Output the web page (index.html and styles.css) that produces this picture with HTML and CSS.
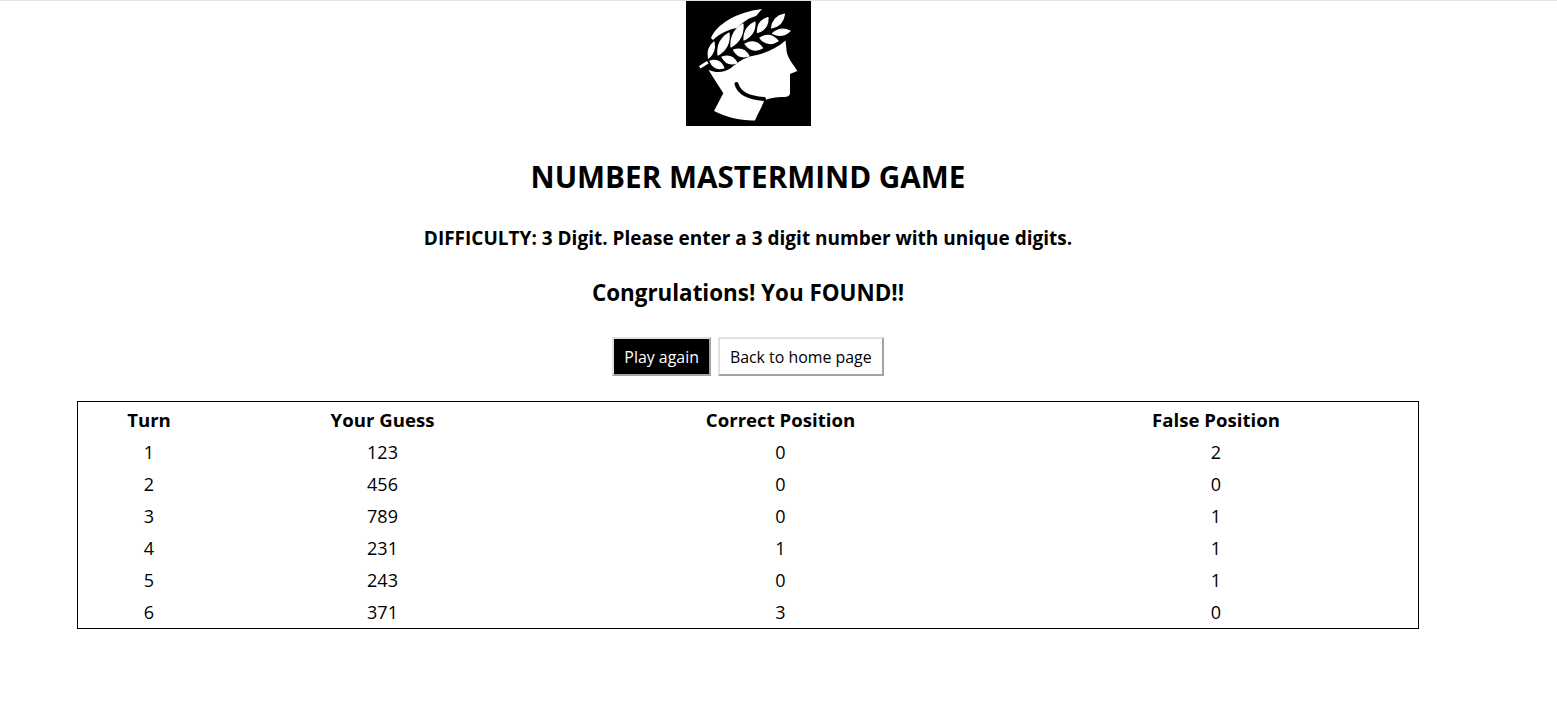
FILE: index.html
```html
<!DOCTYPE html>
<html lang="en">
<head>
<meta charset="utf-8">
<title>Number Mastermind Game</title>
<link rel="stylesheet" href="styles.css">
</head>
<body>
<main class="page">
  <svg class="logo" viewBox="0 0 125 125" role="img" aria-label="Laurel-crowned head">
    <rect class="logo-bg" width="125" height="125"/>
    <path class="w" d="M22.5 69C30 72 38 72 45 67C52 61 58 57 66 55C78 53 90 48 99.5 39.5L100.7 50.7C102 58 108 64 111.3 70L104 73L104 92C104 95 101 96 98 96C90 96 82 97 78 100C75 108 71 114 69 119.5C55 120 40 116 28 110L37.3 92.3Z"/>
    <path class="smile" d="M50.5 83C53 92 63 97 78 98"/>
    <path class="w" d="M25 37C30 24 50 11 76 8L70 15C62 17 56 22 51 27C44 28 34 32 27 39Z"/>
    <path class="w" d="M13 65L21 60L22.5 62.5L14.5 67.5Z"/>
    <path class="w leaf" d="M22.5 57Q20.5 47.4 28 41Q30 50.6 22.5 57Z"/>
    <path class="w leaf" d="M32 54Q30.4 39.4 43 32Q44.6 46.6 32 54Z"/>
    <path class="w leaf" d="M45 46Q43.9 30.8 57 23Q58.1 38.2 45 46Z"/>
    <path class="w leaf" d="M58 39Q57.5 26.4 69 21Q69.5 33.6 58 39Z"/>
    <path class="w leaf" d="M71.5 31.5Q71 20 82 16.5Q82.5 28 71.5 31.5Z"/>
    <path class="w leaf" d="M85.5 27Q86.9 15.2 98.5 13Q97.1 24.8 85.5 27Z"/>
    <path class="w leaf" d="M24 60Q34.1 57.3 38 67Q27.9 69.7 24 60Z"/>
    <path class="w leaf" d="M36 56Q46.1 52.5 51 62Q40.9 65.5 36 56Z"/>
    <path class="w leaf" d="M47.5 49Q57.85 45.5 63 55Q52.65 58.5 47.5 49Z"/>
    <path class="w leaf" d="M59 43Q69.5 37.2 76.5 47Q66 52.8 59 43Z"/>
    <path class="w leaf" d="M74 37Q84.3 30.6 92 40Q81.7 46.4 74 37Z"/>
    <path class="w leaf" d="M86.5 32.5Q94.4 25.3 104 30Q96 37.2 86.5 32.5Z"/>
  </svg>
  <h1 class="title">NUMBER MASTERMIND GAME</h1>
  <h2 class="difficulty">DIFFICULTY: 3 Digit. Please enter a 3 digit number with unique digits.</h2>
  <h2 class="result">Congrulations! You FOUND!!</h2>
  <div class="actions">
    <button class="btn btn-dark" type="button">Play again</button>
    <button class="btn" type="button">Back to home page</button>
  </div>
  <table class="turns">
    <colgroup>
      <col class="c1"><col class="c2"><col class="c3"><col class="c4">
    </colgroup>
    <thead>
      <tr><th>Turn</th><th>Your Guess</th><th>Correct Position</th><th>False Position</th></tr>
    </thead>
    <tbody>
      <tr><td>1</td><td>123</td><td>0</td><td>2</td></tr>
      <tr><td>2</td><td>456</td><td>0</td><td>0</td></tr>
      <tr><td>3</td><td>789</td><td>0</td><td>1</td></tr>
      <tr><td>4</td><td>231</td><td>1</td><td>1</td></tr>
      <tr><td>5</td><td>243</td><td>0</td><td>1</td></tr>
      <tr><td>6</td><td>371</td><td>3</td><td>0</td></tr>
    </tbody>
  </table>
</main>
</body>
</html>
```
FILE: styles.css
```css
html, body { margin: 0; padding: 0; background: #fff; }
body {
  font-family: "Open Sans", "Noto Sans", sans-serif;
  color: #000;
  overflow: hidden;
  border-top: 1px solid #e4e4e4;
}
.page {
  width: 1496px;
  height: 705px;
  display: flex;
  flex-direction: column;
  align-items: center;
}
.logo { width: 125px; height: 125px; display: block; flex: none; }
.logo-bg { fill: #000; }
.w { fill: #fff; }
.leaf { stroke: #fff; stroke-width: 1.2; stroke-linejoin: round; }
.smile { fill: none; stroke: #000; stroke-width: 4; stroke-linecap: round; }
.title { margin: 32px 0 0; font-size: 29.7px; line-height: 38px; font-weight: 700; }
.difficulty { margin: 30px 0 0; font-size: 19px; line-height: 24px; font-weight: 700; }
.result { margin: 29px 0 0; font-size: 22.4px; line-height: 28px; font-weight: 700; }
.actions { margin-top: 30px; display: flex; gap: 7px; }
.btn {
  height: 39px;
  padding: 0 10px;
  border: 2px solid;
  border-color: #e0e0e0 #a3a3a3 #a3a3a3 #e0e0e0;
  background: #fff;
  color: #000;
  font: 15.9px "Open Sans", "Noto Sans", sans-serif;
}
.btn-dark { background: #000; color: #fff; }
.turns {
  margin-top: 25px;
  width: 1342px;
  table-layout: fixed;
  border: 1px solid #000;
  border-collapse: separate;
  border-spacing: 2px;
  font-size: 18px;
}
.c1 { width: 138px; }
.c2 { width: 325px; }
.c3 { width: 467px; }
.c4 { width: 400px; }
.turns th, .turns td { height: 28px; padding: 2px 0 0; text-align: center; line-height: 24px; }
.turns th { font-size: 18.6px; }
```
